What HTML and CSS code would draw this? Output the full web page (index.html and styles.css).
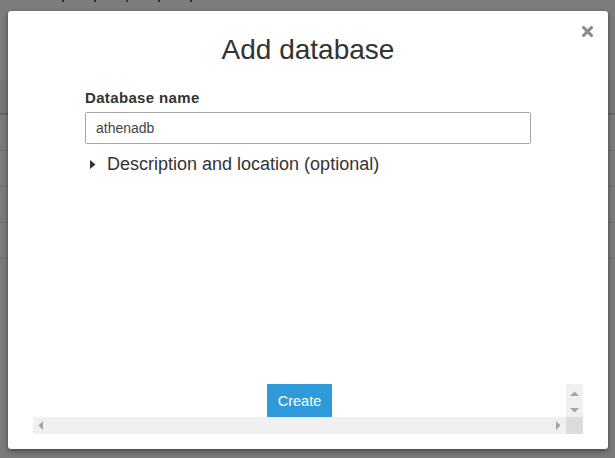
FILE: index.html
```html
<!DOCTYPE html>
<html>
<head>
<meta charset="utf-8">
<link rel="stylesheet" href="styles.css">
</head>
<body>
<div class="page">
  <div class="page-top">
    <i class="tick"></i><i class="tick"></i><i class="tick tick-blue"></i><i class="tick"></i><i class="tick"></i>
  </div>
  <div class="page-band"></div>
  <div class="page-row"></div>
  <div class="page-row"></div>
  <div class="page-row"></div>
  <div class="page-row"></div>
</div>

<div class="modal">
  <button class="close" aria-label="Close">
    <svg width="11" height="11" viewBox="0 0 11 11"><path d="M1.6 1.6 L9.4 9.4 M9.4 1.6 L1.6 9.4" stroke="#8a8a8a" stroke-width="3" stroke-linecap="square"/></svg>
  </button>
  <h1 class="title">Add database</h1>
  <div class="form">
    <label class="label">Database name</label>
    <div class="input">athenadb</div>
    <div class="disclosure">
      <svg class="caret" width="6" height="9" viewBox="0 0 6 9"><path d="M0 0 L5.5 4.5 L0 9 Z" fill="#333"/></svg>
      <span>Description and location (optional)</span>
    </div>
  </div>
  <div class="frame">
    <div class="frame-content"><button class="create">Create</button></div>
    <div class="vscroll">
      <svg width="9" height="6" viewBox="0 0 9 6"><path d="M0 5 L4.5 0.5 L9 5 Z" fill="#a3a3a3"/></svg>
      <svg width="9" height="6" viewBox="0 0 9 6"><path d="M0 1 L4.5 5.5 L9 1 Z" fill="#a3a3a3"/></svg>
    </div>
    <div class="hscroll">
      <svg width="6" height="9" viewBox="0 0 6 9"><path d="M5 0 L0.5 4.5 L5 9 Z" fill="#a3a3a3"/></svg>
      <svg width="6" height="9" viewBox="0 0 6 9"><path d="M1 0 L5.5 4.5 L1 9 Z" fill="#a3a3a3"/></svg>
    </div>
    <div class="corner"></div>
  </div>
</div>
</body>
</html>
```

FILE: styles.css
```css
* { box-sizing: border-box; }
html, body { margin: 0; padding: 0; }
body {
  width: 615px;
  height: 458px;
  overflow: hidden;
  background: #7b7b7b;
  font-family: "Liberation Sans", Arial, sans-serif;
  position: relative;
}
.page { display: flex; flex-direction: column; }
.page-top {
  height: 80px;
  background: #7c7c7c;
  display: flex;
  align-items: flex-start;
  gap: 30px;
  padding-left: 62px;
}
.tick {
  display: block;
  width: 2px;
  height: 2px;
  background: #2a2a2a;
}
.tick-blue { background: #2b3a48; }
.page-band {
  height: 35px;
  background: #777777;
  border-bottom: 2px solid #666666;
}
.page-row {
  height: 36px;
  background: #7b7b7b;
  border-bottom: 1px solid #6e6e6e;
}

.modal {
  position: absolute;
  left: 8px;
  top: 11px;
  width: 600px;
  height: 438px;
  background: #ffffff;
  border-radius: 3px;
  box-shadow: 0 2px 5px rgba(0, 0, 0, 0.45);
  display: flex;
  flex-direction: column;
  align-items: center;
}
.close {
  position: absolute;
  top: 15px;
  right: 15px;
  border: 0;
  padding: 0;
  background: none;
  width: 11px;
  height: 11px;
  display: flex;
}
.title {
  margin: 22px 0 0;
  font-size: 28px;
  font-weight: normal;
  line-height: 34px;
  color: #333333;
}
.form {
  width: 446px;
  margin-top: 22px;
  display: flex;
  flex-direction: column;
}
.label {
  font-size: 15px;
  font-weight: bold;
  letter-spacing: 0.35px;
  line-height: 18px;
  color: #333333;
}
.input {
  margin-top: 5px;
  height: 32px;
  border: 1px solid #a6a6a6;
  border-radius: 2px;
  padding: 0 10px;
  font-size: 14px;
  line-height: 30px;
  color: #444444;
}
.disclosure {
  margin-top: 9px;
  display: flex;
  align-items: center;
  gap: 11px;
  padding-left: 5px;
  font-size: 18px;
  line-height: 22px;
  color: #333333;
}
.frame {
  margin-top: auto;
  margin-bottom: 15px;
  width: 550px;
  display: grid;
  grid-template-columns: 1fr 17px;
  grid-template-rows: 33px 17px;
}
.frame-content {
  display: flex;
  justify-content: center;
  overflow: hidden;
}
.create {
  width: 65px;
  height: 33px;
  border: 0;
  padding: 0;
  background: #2f9ad9;
  color: #ffffff;
  font-family: "Liberation Sans", Arial, sans-serif;
  font-size: 14.5px;
}
.vscroll {
  background: #f0f0f0;
  display: flex;
  flex-direction: column;
  align-items: center;
  justify-content: space-between;
  padding: 7px 0 4px;
}
.hscroll {
  background: #f0f0f0;
  display: flex;
  align-items: center;
  justify-content: space-between;
  padding: 0 5px;
}
.corner { background: #dcdcdc; }
```
